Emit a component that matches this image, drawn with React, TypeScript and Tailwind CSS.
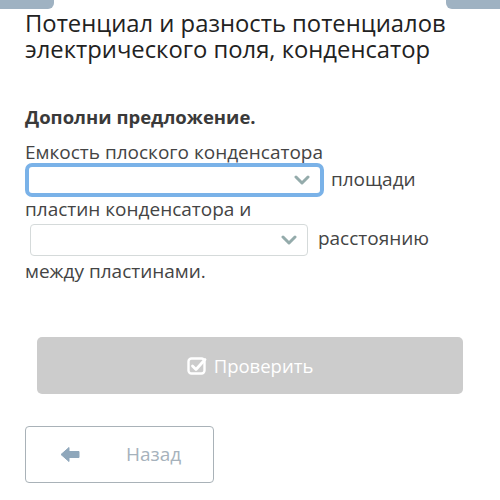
import React from 'react';

function Chevron() {
  return (
    <svg width="16" height="10" viewBox="0 0 16 10" className="shrink-0">
      <path d="M2 2 L8 8 L14 2" fill="none" stroke="#94abab" strokeWidth="3" strokeLinecap="round" strokeLinejoin="round" />
    </svg>
  );
}

export default function App() {
  return (
    <div className="relative w-[500px] h-[500px] bg-white overflow-hidden font-['Open_Sans',sans-serif]">
      <div className="flex justify-between">
        <div className="w-[54px] h-[9px] bg-[#9fb2c2] rounded-br-[6px]" />
        <div className="w-[54px] h-[9px] bg-[#9fb2c2] rounded-bl-[6px]" />
      </div>

      <div className="px-[25px]">
        <h1 className="text-[23.8px] leading-[26px] text-[#222] pt-[1px]">
          Потенциал и разность потенциалов электрического поля, конденсатор
        </h1>

        <h2 className="mt-[43px] text-[18.5px] font-bold text-[#3a3a3a] leading-[24px]">
          Дополни предложение.
        </h2>

        <p className="mt-[11px] text-[19px] leading-[24px] text-[#444]">
          Емкость плоского конденсатора{' '}
          <span className="inline-flex items-center align-middle w-[299px] h-[34px] mt-[-1px] border-[4px] border-[#7ab2e8] rounded-[7px] bg-white px-[10px] justify-end">
            <Chevron />
          </span>{' '}
          <span className="ml-[2px]">площади</span> пластин конденсатора и{' '}
          <span className="inline-flex items-center align-middle w-[278px] h-[32px] my-[3px] ml-[5px] border border-[#d5dada] rounded-[4px] bg-white px-[10px] justify-end">
            <Chevron />
          </span>{' '}
          <span className="ml-[5px]">расстоянию</span> между пластинами.
        </p>

        <div className="mt-[54px] px-[12px]">
          <div className="h-[57px] rounded-[5px] bg-[#cccccc] flex items-center justify-center gap-[7px] text-white text-[18.5px]">
            <svg width="20" height="20" viewBox="0 0 20 20">
              <rect x="1.5" y="2.5" width="16" height="15" rx="3" fill="none" stroke="white" strokeWidth="2.4" />
              <path d="M5.5 10 L9 13.5 L18 3.5" fill="none" stroke="white" strokeWidth="2.8" strokeLinecap="round" strokeLinejoin="round" />
            </svg>
            <span>Проверить</span>
          </div>
        </div>

        <div className="mt-[32px] w-[189px] h-[57px] border border-[#a9b2b8] rounded-[4px] flex items-center">
          <svg width="20" height="17" viewBox="0 0 20 17" className="ml-[34px]">
            <path d="M1 8.5 L9 1.5 L9 5.5 L19 5.5 L19 11.5 L9 11.5 L9 15.5 Z" fill="#8fa7bb" strokeLinejoin="round" stroke="#8fa7bb" strokeWidth="1" />
          </svg>
          <span className="ml-[46px] text-[19px] text-[#a6b2bc]">Назад</span>
        </div>
      </div>
    </div>
  );
}
